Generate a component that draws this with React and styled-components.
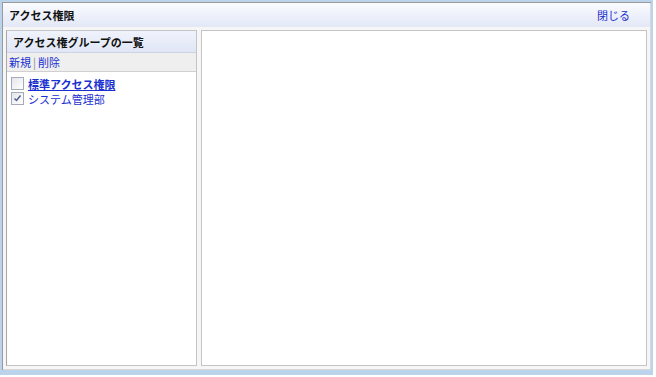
import React from 'react';
import styled, { createGlobalStyle } from 'styled-components';

const GlobalStyle = createGlobalStyle`
    html, body {
        margin: 0;
        padding: 0;
        background: #ffffff;
    }
    body {
        font-family: "Noto Sans CJK JP", "Liberation Sans", sans-serif;
        font-size: 11px;
    }
`;

// Access rights dialog
function App() {
    return (
        <>
            <GlobalStyle />
            <Window>
                <TitleBar>
                    <Title>アクセス権限</Title>
                    <CloseLink href="#">閉じる</CloseLink>
                </TitleBar>
                <Body>
                    <SidePanel>
                        <PanelHeader>アクセス権グループの一覧</PanelHeader>
                        <Toolbar>
                            <ToolLink href="#">新規</ToolLink>
                            <Sep>|</Sep>
                            <ToolLink href="#">削除</ToolLink>
                        </Toolbar>
                        <GroupList>
                            <GroupItem>
                                <CheckBox />
                                <GroupLink href="#" $active>標準アクセス権限</GroupLink>
                            </GroupItem>
                            <GroupItem>
                                <CheckBox $checked />
                                <GroupLink href="#">システム管理部</GroupLink>
                            </GroupItem>
                        </GroupList>
                    </SidePanel>
                    <MainPanel />
                </Body>
            </Window>
        </>
    );
}

// checkbox drawn like the old windows style
function CheckBox({ $checked }) {
    return (
        <Box>
            {$checked && (
                <svg width="9" height="9" viewBox="0 0 9 9">
                    <path d="M1.5 4.5 L3.5 6.5 L7.5 1.5" fill="none" stroke="#4a5a8a" strokeWidth="1.4" />
                </svg>
            )}
        </Box>
    );
}

export default App;

const Window = styled.div`
    width: 649px;
    height: 368px;
    border: 2px solid #bcd3ec;
    border-bottom-width: 5px;
    display: flex;
    flex-direction: column;
    background: #f6f6f6;
    box-shadow: inset 1px 1px 0 #9a9a9a, inset -1px -1px 0 #d8d8d8;
`;

const TitleBar = styled.div`
    height: 24px;
    margin: 1px 1px 0 1px;
    display: flex;
    align-items: center;
    justify-content: space-between;
    padding: 0 20px 0 6px;
    background: linear-gradient(to bottom, #fbfcff 0%, #eef1fb 50%, #e3e8f7 100%);
`;

const Title = styled.div`
    font-weight: bold;
    font-size: 11px;
    color: #111;
`;

const CloseLink = styled.a`
    color: #1a2fd0;
    font-size: 11px;
    text-decoration: none;
`;

const Body = styled.div`
    flex: 1;
    display: flex;
    gap: 4px;
    padding: 3px 4px 4px 4px;
`;

const SidePanel = styled.div`
    width: 189px;
    display: flex;
    flex-direction: column;
    background: #fff;
    border: 1px solid #c4c4c4;
    border-left-color: #a8a8a8;
`;

const PanelHeader = styled.div`
    height: 21px;
    display: flex;
    align-items: center;
    padding-left: 6px;
    font-weight: bold;
    font-size: 11px;
    color: #111;
    background: linear-gradient(to bottom, #f0f3fc 0%, #e0e6f6 100%);
    border-bottom: 1px solid #cfd4e4;
`;

const Toolbar = styled.div`
    height: 19px;
    display: flex;
    align-items: flex-start;
    padding: 1px 0 0 2px;
    box-sizing: border-box;
    gap: 2px;
    background: #efefef;
    border-bottom: 1px solid #d0d0d0;
`;

const ToolLink = styled.a`
    color: #1a2fd0;
    font-size: 11px;
    text-decoration: none;
`;

const Sep = styled.span`
    color: #888;
    font-size: 11px;
`;

const GroupList = styled.div`
    display: flex;
    flex-direction: column;
    padding: 4px 0 0 4px;
`;

const GroupItem = styled.div`
    height: 15px;
    display: flex;
    align-items: center;
    gap: 4px;
`;

const Box = styled.div`
    width: 11px;
    height: 11px;
    border: 1px solid #a4abbb;
    background: linear-gradient(135deg, #e4e6ea 0%, #ffffff 100%);
    display: flex;
    align-items: center;
    justify-content: center;
`;

const GroupLink = styled.a`
    color: #1a2fd0;
    font-size: 11px;
    font-weight: ${p => (p.$active ? 'bold' : 'normal')};
    text-decoration: ${p => (p.$active ? 'underline' : 'none')};
`;

const MainPanel = styled.div`
    flex: 1;
    background: #fff;
    border: 1px solid #c4c4c4;
`;
